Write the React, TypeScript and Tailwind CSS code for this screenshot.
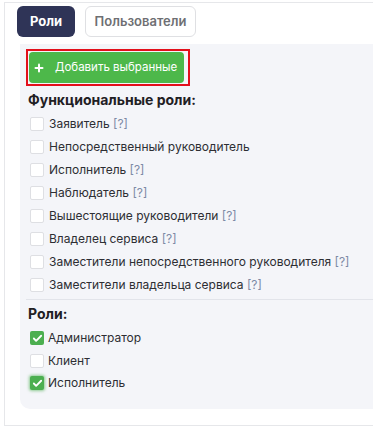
import { Check, Plus } from 'lucide-react';

const functionalRoles = [
  { label: 'Заявитель', hint: true },
  { label: 'Непосредственный руководитель', hint: false },
  { label: 'Исполнитель', hint: true },
  { label: 'Наблюдатель', hint: true },
  { label: 'Вышестоящие руководители', hint: true },
  { label: 'Владелец сервиса', hint: true },
  { label: 'Заместители непосредственного руководителя', hint: true },
  { label: 'Заместители владельца сервиса', hint: true },
];

const roles = [
  { label: 'Администратор', checked: true, focused: false },
  { label: 'Клиент', checked: false, focused: false },
  { label: 'Исполнитель', checked: true, focused: true },
];

const Box = ({ checked, focused }: { checked?: boolean; focused?: boolean }) =>
  checked ? (
    <span
      className={
        'flex h-[14px] w-[14px] shrink-0 items-center justify-center rounded-[2px] bg-[#4caf50] ' +
        (focused ? 'shadow-[0_0_3px_1px_rgba(76,175,80,0.6)]' : '')
      }
    >
      <Check size={11} strokeWidth={4} color="#fff" />
    </span>
  ) : (
    <span className="h-[14px] w-[14px] shrink-0 rounded-[2px] border border-[#dedfe3] bg-white" />
  );

export default function App() {
  return (
    <div
      className="h-[430px] w-[373px] overflow-hidden bg-white pt-[2px] pl-[4px]"
      style={{ fontFamily: 'Inter, "Noto Sans", sans-serif' }}
    >
      <div className="w-[400px] border-t border-b border-l border-[#e6e7ea] pt-[3px] pb-[16px]">
        <div className="flex gap-[10px] pl-[12px]">
          <button className="h-[31px] w-[58px] rounded-[6px] bg-[#2f3457] text-[13px] font-bold text-white">
            Роли
          </button>
          <button className="h-[31px] w-[111px] rounded-[6px] border border-[#dfe0e3] bg-white text-[13px] font-semibold text-[#6e6f73]">
            Пользователи
          </button>
        </div>

        <div className="mt-[7px] ml-[15px] rounded-bl-[10px] bg-[#f4f5f9] pt-[5px] pb-[14px] pl-[6px]">
          <div className="inline-flex border-2 border-[#e3101b] p-[1px] pr-[4px]">
            <button className="flex h-[31px] w-[155px] items-center gap-[10px] rounded-[4px] bg-[#4db84a] pl-[4px] text-[11.5px] whitespace-nowrap text-white">
              <Plus size={12} strokeWidth={4} />
              <span>Добавить выбранные</span>
            </button>
          </div>

          <h3 className="mt-[4px] ml-[2px] text-[14px] leading-[20px] font-bold text-[#1f2024]">
            Функциональные роли:
          </h3>
          <div className="mt-[2px] flex flex-col">
            {functionalRoles.map((role, index) => (
              <div key={index} className="flex h-[23px] items-center gap-[5px] pl-[4px]">
                <Box />
                <span className="text-[12px] text-[#2d2e33]">
                  {role.label}
                  {role.hint && <span className="text-[#7d8aa6]"> [?]</span>}
                </span>
              </div>
            ))}
          </div>

          <div className="mt-[3px] border-t border-[#e2e4ea]" />

          <h3 className="mt-[4px] ml-[2px] text-[14px] leading-[20px] font-bold text-[#1f2024]">Роли:</h3>
          <div className="mt-[3px] flex flex-col">
            {roles.map((role, index) => (
              <div key={index} className="flex h-[22.5px] items-center gap-[4px] pl-[4px]">
                <Box checked={role.checked} focused={role.focused} />
                <span className="text-[12px] text-[#2d2e33]">{role.label}</span>
              </div>
            ))}
          </div>
        </div>
      </div>
    </div>
  );
}
